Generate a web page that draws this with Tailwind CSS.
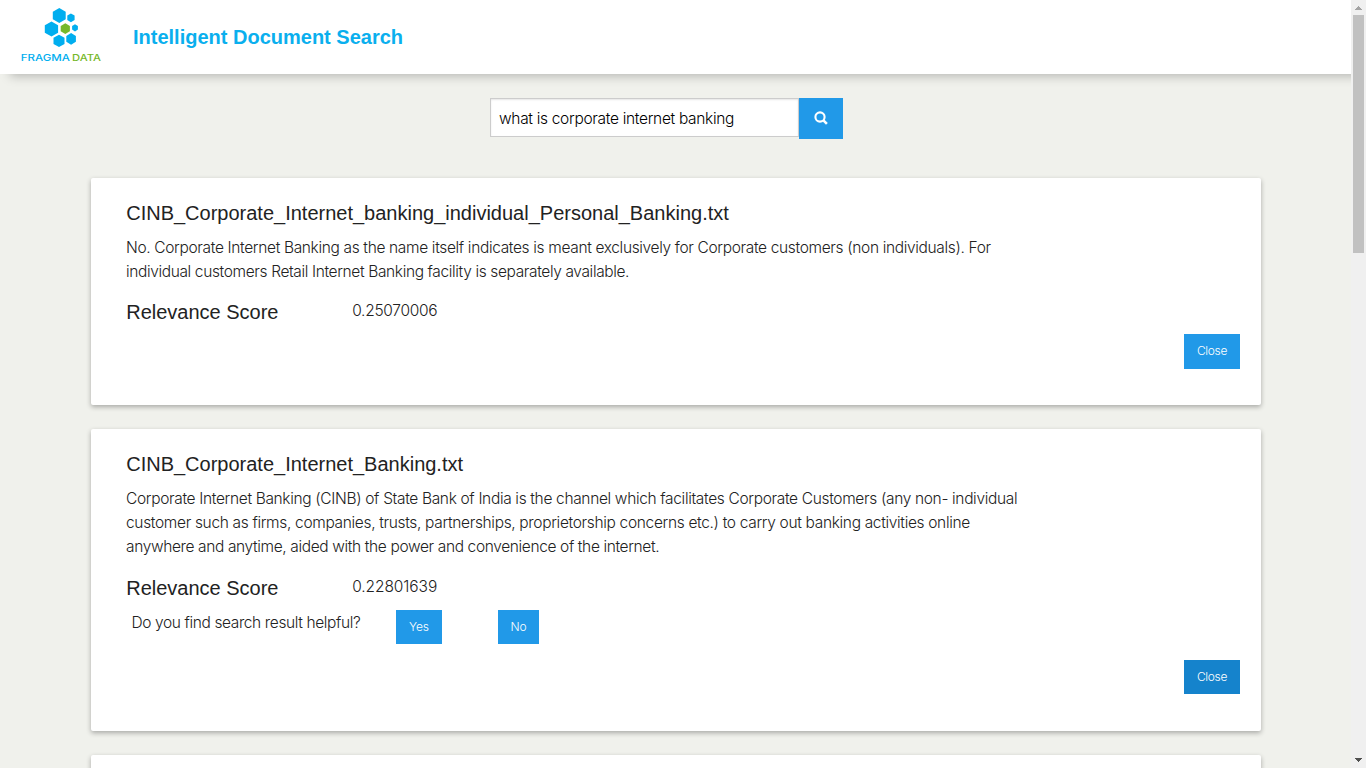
<!DOCTYPE html>
<html lang="en">
<head>
<meta charset="utf-8">
<title>Intelligent Document Search</title>
<script src="https://cdn.jsdelivr.net/npm/@tailwindcss/browser@4"></script>
</head>
<body class="h-[768px] overflow-hidden bg-[#f0f1ec] font-['Inter',sans-serif] text-[15.5px] leading-6 font-light text-[#222]">
<div class="flex h-full">
  <div class="flex min-w-0 flex-1 flex-col overflow-hidden">
    <header class="flex h-[74px] shrink-0 bg-white shadow-[10px_2px_10px_rgba(0,0,0,0.25)]">
      <svg class="w-[120px] shrink-0" height="74" viewBox="0 0 120 74">
        <g fill="#00aeef">
          <path d="M59.3 8l6.4 3.8v7.5L59.3 23l-6.5-3.7v-7.5z"/>
          <path d="M70.9 13.5l3.7 2.1v4.4l-3.7 2.2-3.6-2.2v-4.4z"/>
          <path d="M51.5 21.4l6.6 3.8v7.6l-6.6 3.8-6.7-3.8v-7.6z"/>
          <path d="M75 24.3l2.9 1.7v3.6L75 31.4l-2.9-1.8V26z"/>
          <path d="M59 34.7l5.5 3.1v6.1L59 47l-5.5-3.1v-6.1z"/>
          <path d="M71.1 33.1l4.8 2.8v5.8l-4.8 3-4.8-3v-5.8z"/>
        </g>
        <path fill="#76b82a" d="M65.3 23.3l4.6 2.7v5.2l-4.6 2.7-4.6-2.7V26z"/>
        <g font-family="Inter, sans-serif" font-weight="500" font-size="8.8">
          <text x="20.8" y="61" fill="#00aeef" textLength="49.2" lengthAdjust="spacingAndGlyphs">FRAGMA</text>
          <text x="72.1" y="61" fill="#76b82a" textLength="29" lengthAdjust="spacingAndGlyphs">DATA</text>
        </g>
      </svg>
      <h1 class="ml-[13px] self-center font-['Liberation_Sans'] text-xl font-bold text-[#0aafee]">Intelligent Document Search</h1>
    </header>

    <div class="mt-6 ml-[490px] flex items-start">
      <input class="h-[39px] w-[309px] border border-[#ccc] bg-white px-2 pt-0.5 tracking-[-0.31px] text-black shadow-[inset_0_1px_2px_rgba(0,0,0,0.1)] outline-none" value="what is corporate internet banking">
      <button class="flex h-[41px] w-11 items-center justify-center bg-[#2199e8] pb-px" aria-label="Search">
        <svg width="14" height="14" viewBox="0 0 14 14" fill="none" stroke="#fff" stroke-width="2.1"><circle cx="6" cy="6" r="4.6"/><path d="M9.2 9.2l3.7 3.7" stroke-width="2.6"/></svg>
      </button>
    </div>

    <main class="mt-[39px] ml-[91px] flex w-[1170px] flex-col gap-6">
      <section class="h-[227px] shrink-0 rounded-[2px] bg-white pt-[21px] pr-[21px] pl-[35.2px] shadow-[0_2px_5px_rgba(0,0,0,0.3)]">
        <h2 class="h-7 font-['Liberation_Sans'] text-xl leading-7 font-normal">CINB_Corporate_Internet_banking_individual_Personal_Banking.txt</h2>
        <div class="mt-[9px] -ml-[0.2px] flex flex-col items-start whitespace-nowrap">
          <span class="tracking-[-0.343px]">No. Corporate Internet Banking as the name itself indicates is meant exclusively for Corporate customers (non individuals). For</span>
          <span class="tracking-[-0.365px]">individual customers Retail Internet Banking facility is separately available.</span>
        </div>
        <div class="mt-3.5 flex h-7">
          <h3 class="w-[226px] font-['Liberation_Sans'] text-xl leading-7 font-normal">Relevance Score</h3>
          <span class="pt-px tracking-[-0.28px]">0.25070006</span>
        </div>
        <div class="mt-2 flex justify-end">
          <button class="h-[35px] w-14 bg-[#2199e8] pb-0.5 text-xs tracking-[-0.35px] text-[#fefefe]">Close</button>
        </div>
      </section>

      <section class="h-[302px] shrink-0 rounded-[2px] bg-white pt-[21px] pr-[21px] pl-[35.2px] shadow-[0_2px_5px_rgba(0,0,0,0.3)]">
        <h2 class="h-7 font-['Liberation_Sans'] text-xl leading-7 font-normal">CINB_Corporate_Internet_Banking.txt</h2>
        <div class="mt-[9px] -ml-[0.2px] flex flex-col items-start whitespace-nowrap">
          <span class="tracking-[-0.339px]">Corporate Internet Banking (CINB) of State Bank of India is the channel which facilitates Corporate Customers (any non- individual</span>
          <span class="tracking-[-0.332px]">customer such as firms, companies, trusts, partnerships, proprietorship concerns etc.) to carry out banking activities online</span>
          <span class="tracking-[-0.367px]">anywhere and anytime, aided with the power and convenience of the internet.</span>
        </div>
        <div class="mt-[15px] flex h-7">
          <h3 class="w-[226px] font-['Liberation_Sans'] text-xl leading-7 font-normal">Relevance Score</h3>
          <span class="pt-px tracking-[-0.08px]">0.22801639</span>
        </div>
        <div class="mt-2 ml-[5.3px] flex h-[34px]">
          <span class="w-[264.5px] pt-px tracking-[-0.38px] whitespace-nowrap">Do you find search result helpful?</span>
          <button class="h-[34px] w-[46px] bg-[#2199e8] text-xs tracking-[-0.1px] text-[#fefefe]">Yes</button>
          <button class="ml-14 h-[34px] w-[41px] bg-[#2199e8] text-xs tracking-[-0.1px] text-[#fefefe]">No</button>
        </div>
        <div class="mt-4 flex justify-end">
          <button class="h-[34px] w-14 bg-[#1583cc] text-xs tracking-[-0.35px] text-[#fefefe]">Close</button>
        </div>
      </section>

      <section class="h-[227px] shrink-0 rounded-[2px] bg-white shadow-[0_2px_5px_rgba(0,0,0,0.3)]"></section>
    </main>
  </div>

  <div class="z-10 flex w-[15px] shrink-0 flex-col items-center bg-[#f0f0f0]">
    <svg class="mt-1.5 shrink-0" width="7" height="4"><path fill="#a3a3a3" d="M3 0h1v1h1v1h1v1h1v1H0V3h1V2h1V1h1z"/></svg>
    <div class="mt-[5px] h-[238px] w-[11px] bg-[#c1c1c1]"></div>
    <svg class="mt-auto mb-1.5 shrink-0" width="7" height="4"><path fill="#505050" d="M0 0h7v1H6v1H5v1H4v1H3V3H2V2H1V1H0z"/></svg>
  </div>
</div>
</body>
</html>
